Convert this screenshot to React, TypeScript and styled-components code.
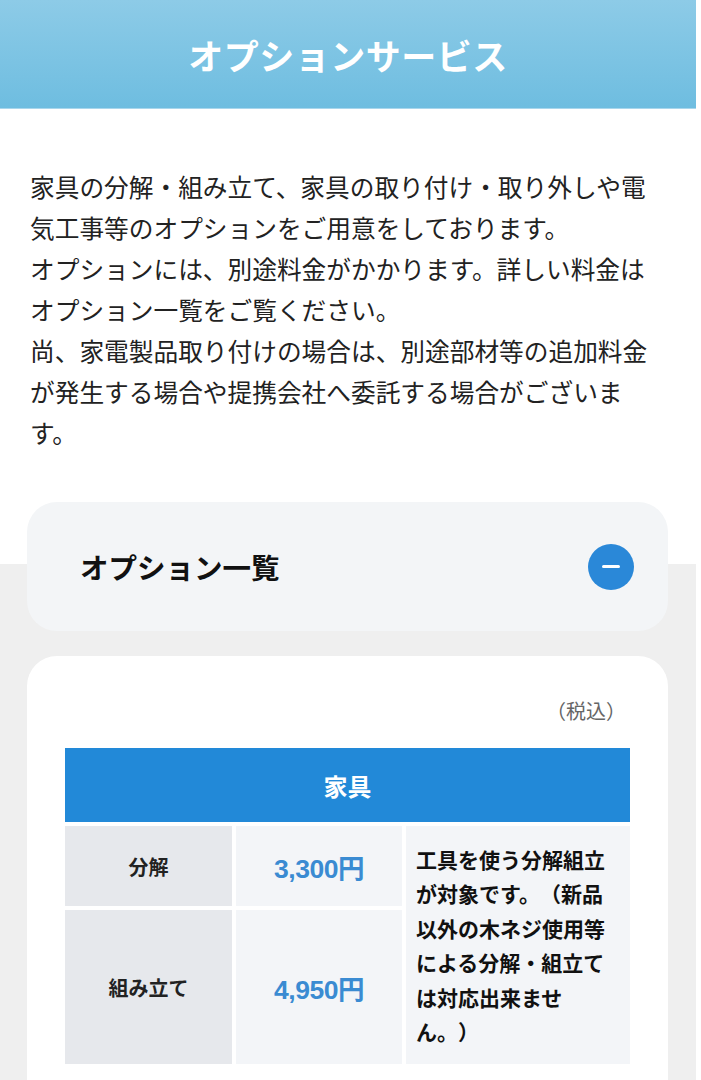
import styled, { createGlobalStyle } from 'styled-components';

const GlobalStyle = createGlobalStyle`
  body {
    margin: 0;
    background: #fff;
    font-family: "Noto Sans CJK JP", "Noto Sans", sans-serif;
    color: #222;
    text-spacing-trim: space-all;
  }
`;

const S = {
  Page: styled.main`
    width: 696px;
  `,
  Header: styled.header`
    height: 108px;
    display: flex;
    align-items: center;
    justify-content: center;
    background: linear-gradient(to bottom, #8dcbe7, #6ebde0);
    border-bottom: 1px solid #a9d6ec;
  `,
  Title: styled.h1`
    margin: 0;
    color: #fff;
    font-size: 35px;
    font-weight: 700;
    letter-spacing: 0.5px;
  `,
  Intro: styled.p`
    margin: 0;
    padding: 57px 30px 49px 30px;
    font-size: 24.7px;
    line-height: 41px;
    color: #222;
  `,
  Section: styled.section`
    padding: 0 28px 0 27px;
    background: linear-gradient(to bottom, #fff 0, #fff 62px, #efefef 62px);
  `,
  AccordionHead: styled.div`
    height: 129px;
    display: flex;
    align-items: center;
    justify-content: space-between;
    padding: 0 34px 0 53px;
    background: #f3f5f7;
    border-radius: 30px;
  `,
  AccordionTitle: styled.h2`
    margin: 0;
    font-size: 28.5px;
    font-weight: 700;
    color: #111;
  `,
  ToggleIcon: styled.span`
    width: 46px;
    height: 46px;
    border-radius: 50%;
    background: #2a88d8;
    display: flex;
    align-items: center;
    justify-content: center;
    &::before {
      content: '';
      width: 18px;
      height: 3px;
      border-radius: 2px;
      background: #fff;
    }
  `,
  Card: styled.div`
    margin-top: 25px;
    padding: 40px 38px 20px 38px;
    background: #fff;
    border-radius: 30px 30px 0 0;
  `,
  TaxNote: styled.p`
    margin: 0 4px 22px 0;
    text-align: right;
    font-size: 20px;
    line-height: 30px;
    color: #666;
  `,
  Table: styled.table`
    width: 565px;
    border-collapse: separate;
    border-spacing: 0;
    table-layout: fixed;
  `,
  CategoryCell: styled.th`
    height: 74px;
    padding: 0;
    background: #2289d8;
    color: #fff;
    font-size: 24px;
    font-weight: 700;
    text-align: center;
    border-bottom: 4px solid #fff;
  `,
  NameCell: styled.th<{ $h: number }>`
    height: ${({ $h }) => $h}px;
    padding: 0;
    background: #e6e8ec;
    font-size: 20px;
    font-weight: 700;
    color: #222;
    text-align: center;
    border-right: 4px solid #fff;
    border-bottom: 4px solid #fff;
  `,
  PriceCell: styled.td`
    padding: 0;
    background: #f3f5f8;
    text-align: center;
    font-family: "Liberation Sans", "Noto Sans CJK JP", sans-serif;
    font-size: 26.5px;
    font-weight: 700;
    color: #3a8bd2;
    letter-spacing: -0.5px;
    border-right: 4px solid #fff;
    border-bottom: 4px solid #fff;
  `,
  NoteCell: styled.td`
    padding: 0 20px 0 10px;
    background: #f3f5f8;
    font-size: 21px;
    font-weight: 700;
    line-height: 34.5px;
    color: #111;
    vertical-align: middle;
    border-bottom: 4px solid #fff;
  `,
};

function App() {
  return (
    <S.Page>
      <GlobalStyle />
      <S.Header>
        <S.Title>オプションサービス</S.Title>
      </S.Header>
      <S.Intro>
        家具の分解・組み立て、家具の取り付け・取り外しや電気工事等のオプションをご用意をしております。
        <br />
        オプションには、別途料金がかかります。詳しい料金はオプション一覧をご覧ください。
        <br />
        尚、家電製品取り付けの場合は、別途部材等の追加料金が発生する場合や提携会社へ委託する場合がございます。
      </S.Intro>
      <S.Section>
        <S.AccordionHead>
          <S.AccordionTitle>オプション一覧</S.AccordionTitle>
          <S.ToggleIcon />
        </S.AccordionHead>
        <S.Card>
          <S.TaxNote>（税込）</S.TaxNote>
          <S.Table>
            <colgroup>
              <col style={{ width: 171 }} />
              <col style={{ width: 170 }} />
              <col style={{ width: 224 }} />
            </colgroup>
            <thead>
              <tr>
                <S.CategoryCell colSpan={3}>家具</S.CategoryCell>
              </tr>
            </thead>
            <tbody>
              <tr>
                <S.NameCell $h={80}>分解</S.NameCell>
                <S.PriceCell>3,300円</S.PriceCell>
                <S.NoteCell rowSpan={2}>
                  工具を使う分解組立が対象です。（新品以外の木ネジ使用等による分解・組立ては対応出来ません。）
                </S.NoteCell>
              </tr>
              <tr>
                <S.NameCell $h={154}>組み立て</S.NameCell>
                <S.PriceCell>4,950円</S.PriceCell>
              </tr>
            </tbody>
          </S.Table>
        </S.Card>
      </S.Section>
    </S.Page>
  );
}

export default App;
